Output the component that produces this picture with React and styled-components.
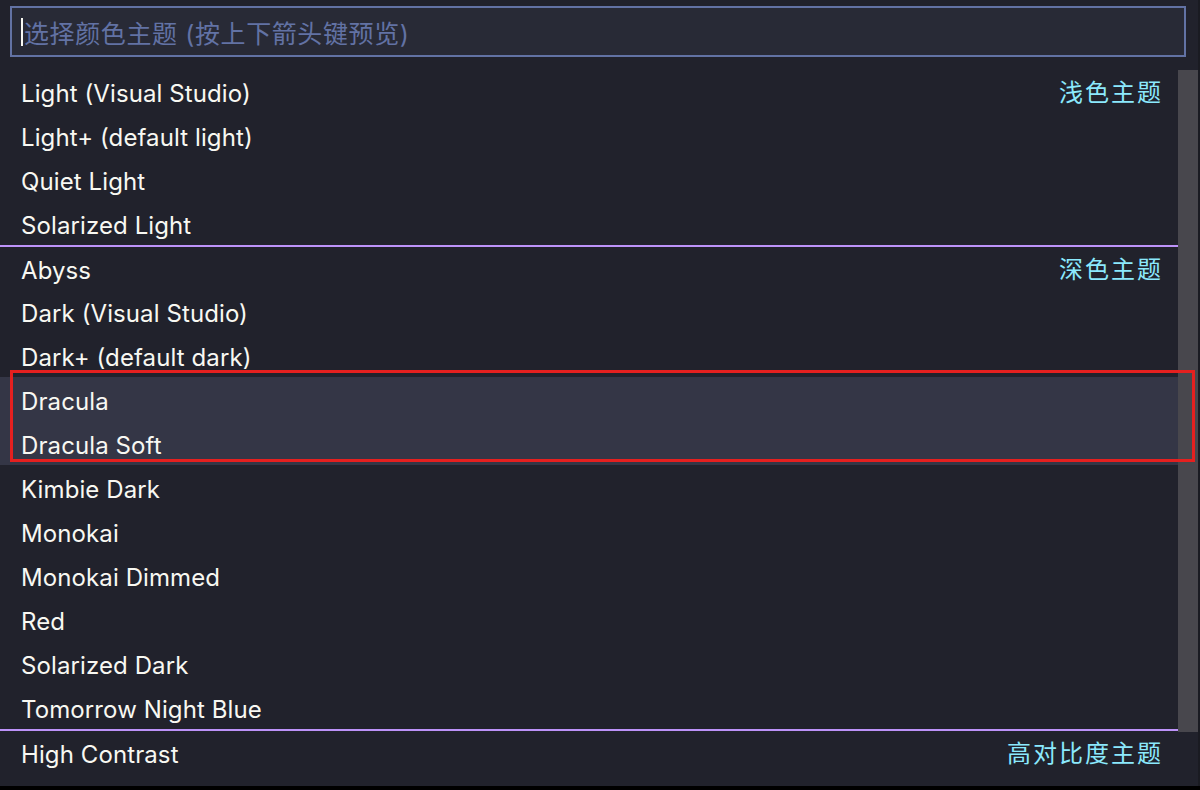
import React from "react";
import styled, { createGlobalStyle } from "styled-components";

const GlobalStyle = createGlobalStyle`
  html, body {
    margin: 0;
    padding: 0;
    background: #000;
  }
  body {
    font-family: "Inter", "Noto Sans CJK SC", sans-serif;
  }
`;

const Panel = styled.div`
  width: 1198px;
  height: 786px;
  background: #21222c;
  border-right: 2px solid #1a1b22;
  display: flex;
  flex-direction: column;
  position: relative;
`;

const InputBox = styled.div`
  margin: 6px 12px 0 10px;
  height: 51px;
  box-sizing: border-box;
  border: 2px solid #6272a4;
  background: #282a36;
  display: flex;
  align-items: center;
  padding-left: 9px;
`;

const Caret = styled.span`
  width: 2px;
  height: 28px;
  background: #f8f8f2;
`;

const Placeholder = styled.span`
  color: #6272a4;
  font-size: 25px;
  letter-spacing: 0.6px;
  padding-left: 1px;
`;

const Body = styled.div`
  margin-top: 12px;
  display: flex;
  flex: 1;
`;

const List = styled.div`
  flex: 1;
  display: flex;
  flex-direction: column;
`;

const Row = styled.div`
  height: 44px;
  box-sizing: border-box;
  display: flex;
  align-items: center;
  justify-content: space-between;
  padding: 4px 15px 0 21px;
  border-top: ${(p) => (p.$first ? "2px solid #bd93f9" : "none")};
  background: ${(p) => (p.$active ? "#343646" : "transparent")};
  margin-right: ${(p) => (p.$first ? "-20px" : "0")};
  padding-right: ${(p) => (p.$first ? "35px" : "15px")};
`;

const Name = styled.span`
  color: #f8f8f2;
  font-size: 24px;
  letter-spacing: 0.1px;
`;

const GroupLabel = styled.span`
  color: #8be9fd;
  font-size: 24px;
  letter-spacing: 2px;
  margin-bottom: 5px;
`;

const ScrollTrack = styled.div`
  width: 20px;
  display: flex;
  flex-direction: column;
  padding-top: 1px;
`;

const Thumb = styled.div`
  height: 662px;
  background: #48474d;
`;

const Marker = styled.div`
  position: absolute;
  left: 10px;
  top: 370px;
  width: 1185px;
  height: 92px;
  box-sizing: border-box;
  border: 3px solid #e5201f;
  pointer-events: none;
`;

const groups = [
  {
    label: "浅色主题",
    items: ["Light (Visual Studio)", "Light+ (default light)", "Quiet Light", "Solarized Light"],
  },
  {
    label: "深色主题",
    items: [
      "Abyss",
      "Dark (Visual Studio)",
      "Dark+ (default dark)",
      "Dracula",
      "Dracula Soft",
      "Kimbie Dark",
      "Monokai",
      "Monokai Dimmed",
      "Red",
      "Solarized Dark",
      "Tomorrow Night Blue",
    ],
  },
  {
    label: "高对比度主题",
    items: ["High Contrast"],
  },
];

const active = ["Dracula", "Dracula Soft"];

export default function App() {
  return (
    <>
      <GlobalStyle />
      <Panel>
        <InputBox>
          <Caret />
          <Placeholder>选择颜色主题 (按上下箭头键预览)</Placeholder>
        </InputBox>
        <Body>
          <List>
            {groups.map((g, gi) =>
              g.items.map((name, i) => (
                <Row key={name} $first={i === 0 && gi > 0} $active={active.includes(name)}>
                  <Name>{name}</Name>
                  {i === 0 && <GroupLabel>{g.label}</GroupLabel>}
                </Row>
              ))
            )}
          </List>
          <ScrollTrack>
            <Thumb />
          </ScrollTrack>
        </Body>
        <Marker />
      </Panel>
    </>
  );
}
